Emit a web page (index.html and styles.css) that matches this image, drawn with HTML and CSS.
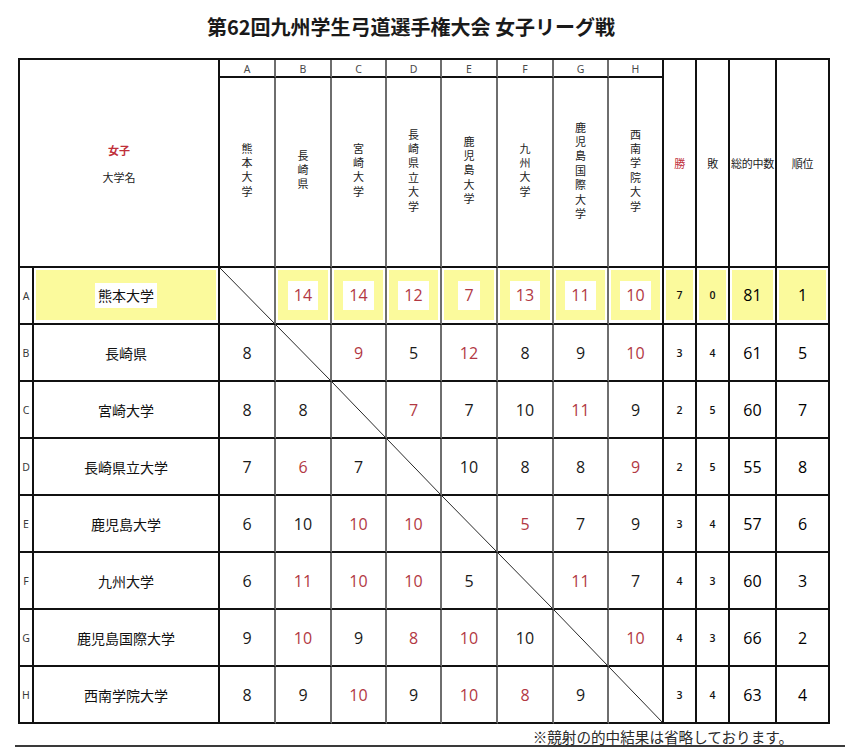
FILE: index.html
```html
<!DOCTYPE html>
<html lang="ja">
<head>
<meta charset="utf-8">
<title>第62回九州学生弓道選手権大会 女子リーグ戦</title>
<link rel="stylesheet" href="styles.css">
</head>
<body>
<div class="page">
  <h1 class="title">第62回九州学生弓道選手権大会 女子リーグ戦</h1>

  <div class="league">
    <div class="c head-name"><div class="women">女子</div><div class="uni">大学名</div></div>
    <div class="c lh g">A</div>
    <div class="c lh g">B</div>
    <div class="c lh g">C</div>
    <div class="c lh g">D</div>
    <div class="c lh g">E</div>
    <div class="c lh g">F</div>
    <div class="c lh g">G</div>
    <div class="c lh">H</div>
    <div class="c sh win">勝</div>
    <div class="c sh">敗</div>
    <div class="c sh">総的中数</div>
    <div class="c sh">順位</div>
    <div class="c g"><span class="vn">熊本大学</span></div>
    <div class="c g"><span class="vn">長崎県</span></div>
    <div class="c g"><span class="vn">宮崎大学</span></div>
    <div class="c g"><span class="vn">長崎県立大学</span></div>
    <div class="c g"><span class="vn">鹿児島大学</span></div>
    <div class="c g"><span class="vn">九州大学</span></div>
    <div class="c g"><span class="vn">鹿児島国際大学</span></div>
    <div class="c"><span class="vn">西南学院大学</span></div>

    <!-- A -->
    <div class="c rl">A</div>
    <div class="c nm hl"><div class="fill"><span class="wb">熊本大学</span></div></div>
    <div class="c g diag"></div>
    <div class="c g n hl"><div class="fill"><span class="wb red">14</span></div></div>
    <div class="c g n hl"><div class="fill"><span class="wb red">14</span></div></div>
    <div class="c g n hl"><div class="fill"><span class="wb red">12</span></div></div>
    <div class="c g n hl"><div class="fill"><span class="wb red">7</span></div></div>
    <div class="c g n hl"><div class="fill"><span class="wb red">13</span></div></div>
    <div class="c g n hl"><div class="fill"><span class="wb red">11</span></div></div>
    <div class="c n hl"><div class="fill"><span class="wb red">10</span></div></div>
    <div class="c wl hl"><div class="fill">7</div></div>
    <div class="c wl hl"><div class="fill">0</div></div>
    <div class="c tot hl"><div class="fill">81</div></div>
    <div class="c tot hl"><div class="fill">1</div></div>

    <!-- B -->
    <div class="c rl">B</div>
    <div class="c nm">長崎県</div>
    <div class="c g n">8</div>
    <div class="c g diag"></div>
    <div class="c g n red">9</div>
    <div class="c g n">5</div>
    <div class="c g n red">12</div>
    <div class="c g n">8</div>
    <div class="c g n">9</div>
    <div class="c n red">10</div>
    <div class="c wl">3</div>
    <div class="c wl">4</div>
    <div class="c tot">61</div>
    <div class="c tot">5</div>

    <!-- C -->
    <div class="c rl">C</div>
    <div class="c nm">宮崎大学</div>
    <div class="c g n">8</div>
    <div class="c g n">8</div>
    <div class="c g diag"></div>
    <div class="c g n red">7</div>
    <div class="c g n">7</div>
    <div class="c g n">10</div>
    <div class="c g n red">11</div>
    <div class="c n">9</div>
    <div class="c wl">2</div>
    <div class="c wl">5</div>
    <div class="c tot">60</div>
    <div class="c tot">7</div>

    <!-- D -->
    <div class="c rl">D</div>
    <div class="c nm">長崎県立大学</div>
    <div class="c g n">7</div>
    <div class="c g n red">6</div>
    <div class="c g n">7</div>
    <div class="c g diag"></div>
    <div class="c g n">10</div>
    <div class="c g n">8</div>
    <div class="c g n">8</div>
    <div class="c n red">9</div>
    <div class="c wl">2</div>
    <div class="c wl">5</div>
    <div class="c tot">55</div>
    <div class="c tot">8</div>

    <!-- E -->
    <div class="c rl">E</div>
    <div class="c nm">鹿児島大学</div>
    <div class="c g n">6</div>
    <div class="c g n">10</div>
    <div class="c g n red">10</div>
    <div class="c g n red">10</div>
    <div class="c g diag"></div>
    <div class="c g n red">5</div>
    <div class="c g n">7</div>
    <div class="c n">9</div>
    <div class="c wl">3</div>
    <div class="c wl">4</div>
    <div class="c tot">57</div>
    <div class="c tot">6</div>

    <!-- F -->
    <div class="c rl">F</div>
    <div class="c nm">九州大学</div>
    <div class="c g n">6</div>
    <div class="c g n red">11</div>
    <div class="c g n red">10</div>
    <div class="c g n red">10</div>
    <div class="c g n">5</div>
    <div class="c g diag"></div>
    <div class="c g n red">11</div>
    <div class="c n">7</div>
    <div class="c wl">4</div>
    <div class="c wl">3</div>
    <div class="c tot">60</div>
    <div class="c tot">3</div>

    <!-- G -->
    <div class="c rl">G</div>
    <div class="c nm">鹿児島国際大学</div>
    <div class="c g n">9</div>
    <div class="c g n red">10</div>
    <div class="c g n">9</div>
    <div class="c g n red">8</div>
    <div class="c g n red">10</div>
    <div class="c g n">10</div>
    <div class="c g diag"></div>
    <div class="c n red">10</div>
    <div class="c wl">4</div>
    <div class="c wl">3</div>
    <div class="c tot">66</div>
    <div class="c tot">2</div>

    <!-- H -->
    <div class="c rl">H</div>
    <div class="c nm">西南学院大学</div>
    <div class="c g n">8</div>
    <div class="c g n">9</div>
    <div class="c g n red">10</div>
    <div class="c g n">9</div>
    <div class="c g n red">10</div>
    <div class="c g n red">8</div>
    <div class="c g n">9</div>
    <div class="c diag"></div>
    <div class="c wl">3</div>
    <div class="c wl">4</div>
    <div class="c tot">63</div>
    <div class="c tot">4</div>
  </div>

  <p class="note">※競射の的中結果は省略しております。</p>
</div>
</body>
</html>
```

FILE: styles.css
```css
html, body {
  margin: 0;
  padding: 0;
  background: #fff;
}

body {
  font-family: "Noto Sans CJK JP", "Noto Sans", sans-serif;
  color: #1a1a1a;
}

.page {
  padding: 15px 0 0 18px;
}

.title {
  width: 812px;
  margin: 0 0 19px;
  padding-right: 26px;
  box-sizing: border-box;
  text-align: center;
  font-size: 20px;
  line-height: 24px;
  font-weight: 700;
  color: #1a1a1a;
}

.league {
  display: grid;
  grid-template-columns: 14px 186px 56px 56px 55px 55px 56px 56px 55px 55px 33px 33px 47px 53px;
  grid-template-rows: 18px 190px repeat(8, 57px);
  width: 812px;
  box-sizing: border-box;
  border-top: 2px solid #111;
  border-left: 2px solid #111;
}

.c {
  box-sizing: border-box;
  border-right: 2px solid #111;
  border-bottom: 2px solid #111;
  display: flex;
  align-items: center;
  justify-content: center;
  min-width: 0;
}

.c.g {
  border-right-color: #6e6e6e;
}

.head-name {
  grid-column: span 2;
  grid-row: span 2;
  flex-direction: column;
  gap: 13px;
  font-size: 11px;
  line-height: 14px;
}

.women {
  color: #c0303a;
  font-weight: 700;
}

.uni {
  color: #222;
}

.lh {
  font-family: "Noto Sans", sans-serif;
  font-size: 10.5px;
  font-weight: 400;
  color: #4a4a4a;
  align-items: flex-end;
  padding-bottom: 1px;
  line-height: 12px;
}

.sh {
  grid-row: span 2;
  font-size: 11px;
  color: #222;
  white-space: nowrap;
  letter-spacing: -0.3px;
}

.sh.win {
  color: #c0303a;
}

.vn {
  writing-mode: vertical-rl;
  text-orientation: upright;
  font-size: 11px;
  letter-spacing: 3.4px;
  line-height: 12px;
  color: #222;
}

.rl {
  font-family: "Noto Sans", sans-serif;
  font-size: 10.5px;
  font-weight: 400;
  color: #3a3a3a;
}

.nm {
  font-size: 14px;
  color: #111;
}

.n,
.tot {
  font-family: "Open Sans", "Noto Sans", sans-serif;
  font-size: 16px;
  color: #1a1a1a;
}

.tot {
  color: #000;
}

.wl {
  font-family: "Open Sans", "Noto Sans", sans-serif;
  font-size: 10.5px;
  font-weight: 600;
  color: #111;
}

.red {
  color: #b23843;
}

.diag {
  background-image: linear-gradient(to top right, transparent calc(50% - 0.7px), #222 50%, transparent calc(50% + 0.7px));
  background-origin: border-box;
  background-clip: border-box;
}

.hl {
  padding: 2px 2px 3px;
  align-items: stretch;
  justify-content: stretch;
}

.fill {
  flex: 1;
  background: #fbfa9c;
  display: flex;
  align-items: center;
  justify-content: center;
}

.wb {
  background: #fff;
  padding: 5px 6px;
  line-height: 19px;
}

.nm .wb {
  padding: 3px 3px;
}

.note {
  width: 830px;
  margin: 5px 0 0 -3px;
  padding-right: 52px;
  box-sizing: border-box;
  text-align: right;
  font-size: 14.6px;
  line-height: 16px;
  color: #2a2a2a;
  border-bottom: 2px solid #3a3a3a;
}
```
